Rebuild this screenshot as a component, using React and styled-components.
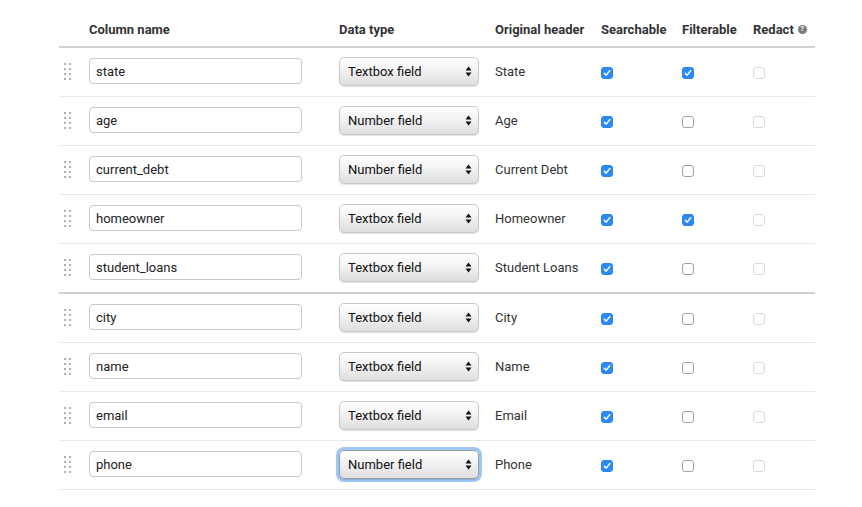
import React from "react";
import styled, { createGlobalStyle, css } from "styled-components";

const Global = createGlobalStyle`
  html, body { margin: 0; padding: 0; background: #fff; }
  body { font-family: Roboto, "Noto Sans", "Liberation Sans", sans-serif; color: #333; }
`;

const Page = styled.div`
  padding: 13px 0 0 59px;
`;

const Table = styled.div`
  width: 756px;
`;

const cols = "22px 250px 156px 106px 81px 71px 70px";

const HeaderRow = styled.div`
  display: grid;
  grid-template-columns: ${cols};
  border-bottom: 2px solid #d2d2d2;
`;

const HeadCell = styled.div`
  padding: 8px;
  font-size: 13px;
  font-weight: 700;
  line-height: 17px;
  color: #333;
  white-space: nowrap;
  display: flex;
  align-items: center;
  gap: 4px;
`;

const Row = styled.div`
  display: grid;
  grid-template-columns: ${cols};
  height: 48px;
  align-items: center;
  border-bottom: ${(p) => (p.$divider ? "2px solid #d2d2d2" : "1px solid #e8e8e8")};
`;

const Cell = styled.div`
  padding: 0 8px;
  display: flex;
  align-items: center;
  font-size: 13px;
  color: #333;
`;

const TextCell = styled(Cell)`
  margin-bottom: 2px;
`;

const HandleCell = styled.div`
  padding-left: 5px;
  display: flex;
  align-items: center;
  margin-bottom: 1px;
`;

const NameInput = styled.input`
  box-sizing: border-box;
  width: 213px;
  height: 26px;
  margin-bottom: 2px;
  border: 1px solid #c9c9c9;
  border-radius: 4px;
  padding: 0 6px;
  font-family: Roboto, "Noto Sans", sans-serif;
  font-size: 13px;
  color: #222;
  outline: none;
  background: #fff;
`;

const SelectWrap = styled.div`
  position: relative;
  width: 140px;
  height: 29px;
  margin-bottom: 2px;
  border-radius: 5px;
  ${(p) =>
    p.$focused &&
    css`
      box-shadow: 0 0 0 3px #9cc8f7;
    `}
`;

const Select = styled.select`
  appearance: none;
  -webkit-appearance: none;
  box-sizing: border-box;
  width: 140px;
  height: 29px;
  border: 1px solid ${(p) => (p.$focused ? "#9a9a9a" : "#c8c8c8")};
  border-radius: 5px;
  padding: 0 20px 0 8px;
  background: linear-gradient(#ffffff 0%, #f4f4f4 40%, #dedede 100%);
  box-shadow: 0 1px 1px rgba(0, 0, 0, 0.12);
  font-family: Roboto, "Noto Sans", sans-serif;
  font-size: 13px;
  color: #111;
  outline: none;
`;

const Arrows = styled.svg`
  position: absolute;
  right: 7px;
  top: 9px;
  pointer-events: none;
`;

const Box = styled.span`
  box-sizing: border-box;
  display: inline-flex;
  align-items: center;
  justify-content: center;
  width: 12px;
  height: 12px;
  margin-top: 2px;
  border-radius: 3px;
  ${(p) =>
    p.$checked
      ? css`
          background: #2c8af4;
          border: 1px solid #2a84ea;
        `
      : css`
          background: #fff;
          border: 1px solid ${p.$disabled ? "#dadada" : "#a3a3a3"};
        `}
`;

const Help = styled.span`
  display: inline-flex;
  align-items: center;
  justify-content: center;
  width: 9px;
  height: 9px;
  border-radius: 50%;
  background: #7a7a7a;
  color: #fff;
  font-size: 7px;
  font-weight: 700;
  line-height: 9px;
`;

function Handle() {
  const dots = [];
  for (let r = 0; r < 4; r++)
    for (let c = 0; c < 2; c++)
      dots.push(<rect key={r + "-" + c} x={c * 5} y={r * 5} width="2" height="2" fill="#b0b0b0" />);
  return (
    <svg width="8" height="18" viewBox="0 0 8 18">
      {dots}
    </svg>
  );
}

function Checkbox({ checked, disabled }) {
  return (
    <Box $checked={checked} $disabled={disabled}>
      {checked && (
        <svg width="8" height="8" viewBox="0 0 8 8">
          <path d="M1.3 4.3 L3.2 6.1 L6.8 1.6" fill="none" stroke="#fff" strokeWidth="1.5" strokeLinecap="round" strokeLinejoin="round" />
        </svg>
      )}
    </Box>
  );
}

const rows = [
  { name: "state", type: "Textbox field", header: "State", s: true, f: true },
  { name: "age", type: "Number field", header: "Age", s: true, f: false },
  { name: "current_debt", type: "Number field", header: "Current Debt", s: true, f: false },
  { name: "homeowner", type: "Textbox field", header: "Homeowner", s: true, f: true },
  { name: "student_loans", type: "Textbox field", header: "Student Loans", s: true, f: false, divider: true },
  { name: "city", type: "Textbox field", header: "City", s: true, f: false },
  { name: "name", type: "Textbox field", header: "Name", s: true, f: false },
  { name: "email", type: "Textbox field", header: "Email", s: true, f: false },
  { name: "phone", type: "Number field", header: "Phone", s: true, f: false, focused: true },
];

export default function App() {
  return (
    <Page>
      <Global />
      <Table>
        <HeaderRow>
          <HeadCell />
          <HeadCell>Column name</HeadCell>
          <HeadCell>Data type</HeadCell>
          <HeadCell>Original header</HeadCell>
          <HeadCell>Searchable</HeadCell>
          <HeadCell>Filterable</HeadCell>
          <HeadCell>
            Redact <Help>?</Help>
          </HeadCell>
        </HeaderRow>
        {rows.map((r) => (
          <Row key={r.name} $divider={r.divider}>
            <HandleCell>
              <Handle />
            </HandleCell>
            <Cell>
              <NameInput defaultValue={r.name} />
            </Cell>
            <Cell>
              <SelectWrap $focused={r.focused}>
                <Select defaultValue={r.type} $focused={r.focused}>
                  <option>Textbox field</option>
                  <option>Number field</option>
                </Select>
                <Arrows width="7" height="11" viewBox="0 0 7 11">
                  <path d="M3.5 0.5 L6.5 4.5 L0.5 4.5 Z" fill="#111" />
                  <path d="M3.5 10.5 L6.5 6.5 L0.5 6.5 Z" fill="#111" />
                </Arrows>
              </SelectWrap>
            </Cell>
            <TextCell>{r.header}</TextCell>
            <Cell>
              <Checkbox checked={r.s} />
            </Cell>
            <Cell>
              <Checkbox checked={r.f} />
            </Cell>
            <Cell>
              <Checkbox disabled />
            </Cell>
          </Row>
        ))}
      </Table>
    </Page>
  );
}
